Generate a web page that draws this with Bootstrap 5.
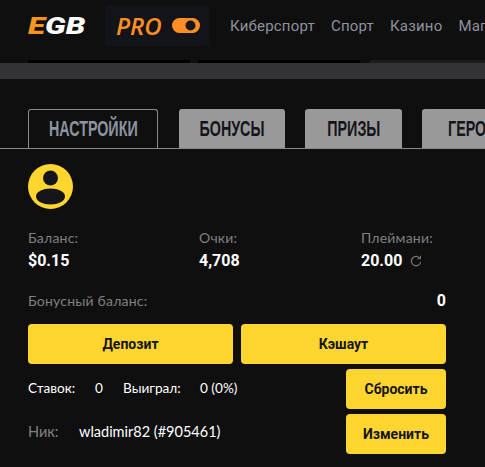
<!doctype html>
<html lang="ru"><head><meta charset="utf-8"><title>EGB</title>
<link href="https://cdn.jsdelivr.net/npm/bootstrap@5.3.0/dist/css/bootstrap.min.css" rel="stylesheet">
<style>
html,body{height:467px;overflow:hidden;background:#0f0f0f}
body{font-family:Roboto,sans-serif;color:#fff}
.top-bar{height:60px;padding-left:28px}
.logo-text{width:60px;font:italic 900 23px/1 Roboto,sans-serif;color:#fff;padding-bottom:8px;flex:none}
.logo-text b{display:inline-block;font-weight:900;transform:scaleX(1.36);transform-origin:0 50%}
.logo-text span{color:#f7941d}
.pro-box{width:104px;height:41px;margin:0 21px 9px 17px;background:#13141a;border-radius:3px;padding-left:11px;flex:none;gap:10px}
.pro-word{font:italic 600 24px/1 "Open Sans",sans-serif;color:#ff8f22}
.top-links{gap:16px;font-size:15px;color:#8d929c;white-space:nowrap;padding-bottom:8px;letter-spacing:.2px}
.strip-a{height:3px;padding-left:28px}
.strip-a i{display:block;height:3px;background:#000}
.strip-b{height:16px;background:#333335}
.tab-row{margin-top:30px;height:40px;padding-left:28px;border-bottom:1px solid #8b8b8b;flex-wrap:nowrap;white-space:nowrap}
.tab-item{height:39px;margin-right:20px;background:#999;color:#14141c;border-radius:3px 3px 0 0;font:700 22px/39px "Liberation Sans",sans-serif;flex:none}
.tab-item span{display:block;flex:none;transform:scaleX(.65)}
.tab-on{width:130px;height:40px;margin-right:21px;background:#0f0f0f;color:#8d949e;border:1px solid #8b8b8b;border-bottom-color:#0f0f0f;line-height:38px}
.pad-area{padding:15px 39px 0 28px}
.face{display:block;width:45px;height:45px}
.stat-row{margin-top:20px;height:43px}
.lbl{font:400 14px/18px Lato,sans-serif;color:#808083;letter-spacing:.2px}
.val{font:700 16px/24px Roboto,sans-serif;color:#fff;margin-top:2px}
.c1{width:171px}.c2{width:162px}
.bonus-row{margin-top:16px;height:26px}
.bonus-row .val{margin:0}
.y-btn{background:#ffd630;border:0;border-radius:4px;color:#14141c;font:700 14px/1 Roboto,sans-serif;height:40px;padding:0}
.y-btn:hover{background:#ffd630;color:#14141c}
.pay-row{margin-top:10px;gap:8px}
.pay-row .y-btn{flex:1}
.info-row{margin-top:5px;font:400 13.600px/1 Lato,sans-serif;color:#fff}
.info-row .y-btn{width:100px;flex:none}
.nick-row{font-size:14.500px}
.gray-lbl{color:#808083}
.w1{width:67px}.w2{width:28px}.w3{width:77px}
.w4{width:51px}
.low{margin-top:-3px}
</style></head><body>
<div class="top-bar d-flex align-items-center overflow-hidden">
  <div class="logo-text"><b><span>E</span>GB</b></div>
  <div class="pro-box d-flex align-items-center">
    <span class="pro-word">PRO</span>
    <svg width="28" height="15" viewBox="0 0 28 15"><rect width="28" height="15" rx="7.5" fill="#ff8f22"/><circle cx="18.500" cy="7.500" r="5" fill="#16161c"/></svg>
  </div>
  <div class="top-links d-flex align-items-center"><span>Киберспорт</span><span>Спорт</span><span>Казино</span><span>Магазин</span></div>
</div>
<div class="strip-a d-flex"><i style="width:162px"></i><i style="width:162px;margin-left:8px"></i><i style="width:115px;margin-left:10px;background:#1c1c1e"></i></div>
<div class="strip-b"></div>
<div class="tab-row d-flex overflow-hidden">
  <div class="tab-item tab-on d-flex justify-content-center"><span>НАСТРОЙКИ</span></div>
  <div class="tab-item d-flex justify-content-center" style="width:106px"><span>БОНУСЫ</span></div>
  <div class="tab-item d-flex justify-content-center" style="width:97px"><span>ПРИЗЫ</span></div>
  <div class="tab-item d-flex justify-content-center" style="width:100px"><span>ГЕРОЙ</span></div>
</div>
<div class="pad-area">
  <svg class="face" viewBox="0 0 45 45"><circle cx="22.500" cy="22.500" r="22.500" fill="#ffd630"/><circle cx="22.500" cy="14" r="7.500" fill="#16161a"/><ellipse cx="22.500" cy="32.500" rx="14.500" ry="8" fill="#16161a"/></svg>
  <div class="stat-row d-flex">
    <div class="c1"><div class="lbl">Баланс:</div><div class="val">$0.15</div></div>
    <div class="c2"><div class="lbl">Очки:</div><div class="val">4,708</div></div>
    <div><div class="lbl">Плеймани:</div><div class="val d-flex align-items-center gap-2">20.00
      <svg width="12" height="12" viewBox="0 0 12 12" fill="none" stroke="#77777a" stroke-width="1.200"><path d="M10 3.500A4.700 4.700 0 1 0 10.700 7"/><path d="M10.500 .8v3h-3" stroke-width="1"/></svg></div></div>
  </div>
  <div class="bonus-row d-flex justify-content-between align-items-center"><div class="lbl">Бонусный баланс:</div><div class="val">0</div></div>
  <div class="pay-row d-flex"><button class="btn y-btn">Депозит</button><button class="btn y-btn">Кэшаут</button></div>
  <div class="info-row d-flex align-items-center">
    <span class="w1">Ставок:</span><span class="w2">0</span><span class="w3">Выиграл:</span><span>0 (0%)</span>
    <button class="btn y-btn ms-auto">Сбросить</button>
  </div>
  <div class="info-row nick-row d-flex align-items-center">
    <span class="w4 gray-lbl low">Ник:</span><span class="low">wladimir82 (#905461)</span>
    <button class="btn y-btn ms-auto">Изменить</button>
  </div>
</div>
<script src="https://cdn.jsdelivr.net/npm/bootstrap@5.3.0/dist/js/bootstrap.bundle.min.js"></script>
</body></html>
